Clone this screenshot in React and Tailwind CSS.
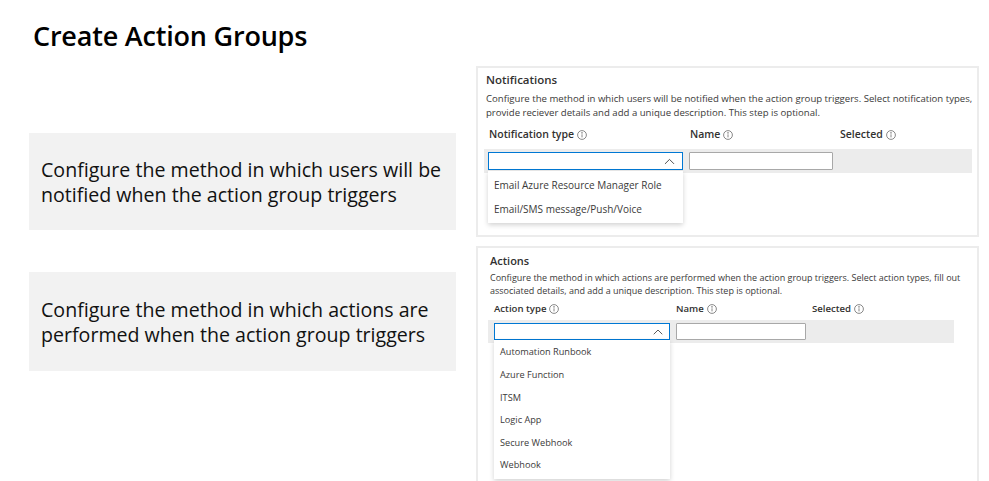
import { ChevronUp } from 'lucide-react';

const notifyTypes = ['Email Azure Resource Manager Role', 'Email/SMS message/Push/Voice'];
const actionTypes = ['Automation Runbook', 'Azure Function', 'ITSM', 'Logic App', 'Secure Webhook', 'Webhook'];

function Info() {
  return (
    <svg width="10" height="10" viewBox="0 0 10 10" className="inline-block ml-[3px] -mt-[1px]" fill="none" stroke="#6b6b6b" strokeWidth="0.8">
      <circle cx="5" cy="5" r="4.4" />
      <line x1="5" y1="4.3" x2="5" y2="7.4" />
      <circle cx="5" cy="2.9" r="0.35" fill="#6b6b6b" />
    </svg>
  );
}

export default function App() {
  return (
    <div className="w-[989px] h-[481px] overflow-hidden bg-white text-[#1b1b1b] font-['Open_Sans',sans-serif]">
      <div className="h-[66px] pl-[33px] pt-[17px]">
        <h1 className="text-[27px] font-semibold leading-[38px] tracking-[-0.2px] text-black">Create Action Groups</h1>
      </div>

      <div className="flex">
        {/* left captions */}
        <div className="ml-[29px] w-[427px] flex flex-col">
          <div className="mt-[67px] h-[97px] bg-[#f2f2f2] pl-[12px] flex items-center">
            <p className="text-[19.6px] leading-[25px] text-[#111]">
              Configure the method in which users will be<br />notified when the action group triggers
            </p>
          </div>
          <div className="mt-[42px] h-[99px] bg-[#f2f2f2] pl-[12px] flex items-center">
            <p className="text-[19.6px] leading-[25px] text-[#111]">
              Configure the method in which actions are<br />performed when the action group triggers
            </p>
          </div>
        </div>

        {/* right panels */}
        <div className="ml-[20px] w-[503px] flex flex-col gap-[9px]">
          <section className="h-[171px] border-2 border-[#ececec] pl-[8px] pt-[4px]">
            <h2 className="text-[11.5px] font-semibold leading-[16px] text-[#323130]">Notifications</h2>
            <p className="mt-[4px] text-[9.6px] leading-[14px] text-[#3b3a39] whitespace-nowrap">
              Configure the method in which users will be notified when the action group triggers. Select notification types,<br />
              provide reciever details and add a unique description. This step is optional.
            </p>
            <div className="mt-[7px] flex text-[10.5px] font-semibold text-[#323130] leading-[14px] pl-[3px]">
              <span className="w-[201px]">Notification type<Info /></span>
              <span className="w-[150px]">Name<Info /></span>
              <span>Selected<Info /></span>
            </div>
            <div className="relative mt-[8px] mr-[5px] -ml-[2px] h-[24px] bg-[#ececec] flex items-center pl-[4px] gap-[6px]">
              <div className="w-[195px] h-[18px] border border-[#0078d4] bg-white flex items-center justify-end pr-[4px]">
                <ChevronUp size={17} strokeWidth={1.2} color="#333" />
              </div>
              <div className="w-[144px] h-[18px] border border-[#a8a8a8] rounded-[1px] bg-white" />
              <div className="absolute left-[4px] top-[22px] w-[195px] bg-white shadow-[0_2px_5px_rgba(0,0,0,0.18)] py-[2px] z-10">
                {notifyTypes.map(t => (
                  <div key={t} className="h-[24px] flex items-center pl-[6px] text-[10px] text-[#3b3a39]">{t}</div>
                ))}
              </div>
            </div>
          </section>

          <section className="h-[250px] border-2 border-[#ececec] pl-[12px] pt-[5px]">
            <h2 className="text-[11px] font-semibold leading-[16px] text-[#323130]">Actions</h2>
            <p className="mt-[2px] text-[9px] leading-[13px] text-[#3b3a39] whitespace-nowrap">
              Configure the method in which actions are performed when the action group triggers. Select action types, fill out<br />
              associated details, and add a unique description. This step is optional.
            </p>
            <div className="mt-[5px] flex text-[9.6px] font-semibold text-[#323130] leading-[13px] pl-[4px]">
              <span className="w-[182px]">Action type<Info /></span>
              <span className="w-[136px]">Name<Info /></span>
              <span>Selected<Info /></span>
            </div>
            <div className="relative mt-[5px] w-[466px] -ml-[2px] h-[23px] bg-[#ececec] flex items-center pl-[6px] gap-[6px]">
              <div className="w-[176px] h-[17px] border border-[#0078d4] bg-white flex items-center justify-end pr-[3px]">
                <ChevronUp size={16} strokeWidth={1.2} color="#333" />
              </div>
              <div className="w-[130px] h-[17px] border border-[#a8a8a8] rounded-[1px] bg-white" />
              <div className="absolute left-[6px] top-[20px] w-[176px] bg-white shadow-[0_2px_5px_rgba(0,0,0,0.18)] pt-[1px] pb-[2px] z-10">
                {actionTypes.map(t => (
                  <div key={t} className="h-[22.6px] flex items-center pl-[6px] text-[9.2px] text-[#3b3a39]">{t}</div>
                ))}
              </div>
            </div>
          </section>
        </div>
      </div>
    </div>
  );
}
